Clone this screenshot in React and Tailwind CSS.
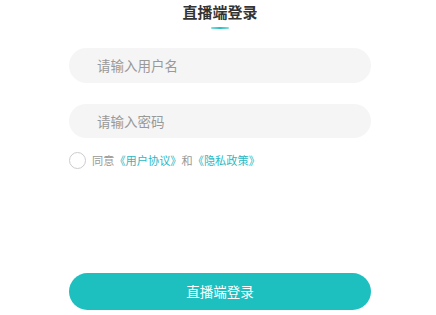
export default function App() {
  const font = { fontFamily: '"Noto Sans CJK SC", "Noto Sans", sans-serif' };
  return (
    <div className="w-[436px] h-[315px] bg-white overflow-hidden" style={font}>
      <div className="flex flex-col items-center pt-[2px] pl-[4px]">
        <div className="text-[15px] font-bold text-[#333] leading-[20px]">直播端登录</div>
        <div className="mt-[5px] h-[2px] w-[18px] rounded-full bg-gradient-to-r from-[#7fe0e0] via-[#1fbfbf] to-[#7fe0e0]" />
      </div>
      <div className="ml-[69px] w-[302px] flex flex-col">
        <div className="mt-[19px] h-[35px] rounded-full bg-[#f5f5f5] flex items-center pl-[28px] text-[13.5px] text-[#999]">
          请输入用户名
        </div>
        <div className="mt-[21px] h-[34px] rounded-full bg-[#f5f5f5] flex items-center pl-[28px] text-[13.5px] text-[#999]">
          请输入密码
        </div>
        <div className="mt-[14px] flex items-center">
          <div className="w-[17px] h-[17px] rounded-full border border-[#ccc]" />
          <span className="ml-[6px] text-[11.2px] text-[#999]">同意</span>
          <span className="text-[11.2px] text-[#2bb8c4]">《用户协议》</span>
          <span className="text-[11.2px] text-[#999]">和</span>
          <span className="text-[11.2px] text-[#2bb8c4]">《隐私政策》</span>
        </div>
        <div className="mt-[104px] h-[37px] rounded-full bg-[#1ebfbf] flex items-center justify-center text-white text-[13.5px]">
          直播端登录
        </div>
      </div>
    </div>
  );
}
